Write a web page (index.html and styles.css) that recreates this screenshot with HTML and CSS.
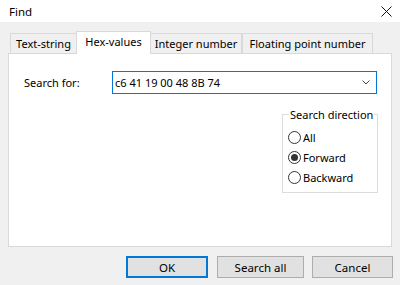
FILE: index.html
```html
<!DOCTYPE html>
<html lang="en">
<head>
  <meta charset="UTF-8">
  <title>Find</title>
  <link rel="stylesheet" href="styles.css">
</head>
<body>
  <div class="window">
    <div class="titlebar">
      <span class="title">Find</span>
      <svg class="close" width="11" height="11" viewBox="0 0 11 11">
        <path d="M0.5 0.5 L10.5 10.5 M10.5 0.5 L0.5 10.5" stroke="#111" stroke-width="1" fill="none"/>
      </svg>
    </div>

    <div class="content">
      <div class="tabs">
        <div class="tab tab-text">Text-string</div>
        <div class="tab tab-hex active">Hex-values</div>
        <div class="tab tab-int">Integer number</div>
        <div class="tab tab-float">Floating point number</div>
      </div>

      <div class="panel">
        <div class="search-row">
          <label class="search-label">Search for:</label>
          <div class="combo">
            <span class="combo-value">c6 41 19 00 48 8B 74</span>
            <svg class="chevron" width="8" height="5" viewBox="0 0 8 5">
              <path d="M0.5 0.5 L4 4 L7.5 0.5" stroke="#444" stroke-width="1" fill="none"/>
            </svg>
          </div>
        </div>

        <fieldset class="direction">
          <legend>Search direction</legend>
          <div class="radio"><span class="dot"></span>All</div>
          <div class="radio checked"><span class="dot"></span>Forward</div>
          <div class="radio"><span class="dot"></span>Backward</div>
        </fieldset>
      </div>

      <div class="buttons">
        <button class="btn btn-ok">OK</button>
        <button class="btn btn-all">Search all</button>
        <button class="btn btn-cancel">Cancel</button>
      </div>
    </div>
  </div>
</body>
</html>
```

FILE: styles.css
```css
body {
  margin: 0;
  font-family: "Noto Sans", "Liberation Sans", sans-serif;
  font-size: 11px;
  color: #000;
  background-color: #f0f0f0;
}

.window {
  width: 400px;
  height: 285px;
  background-color: #f0f0f0;
}

.titlebar {
  height: 22px;
  background-color: #fff;
  display: flex;
  justify-content: space-between;
  align-items: center;
  padding: 0 8px 0 9px;
}

.title {
  font-size: 11.5px;
}

.close {
  margin-top: 1px;
}

.content {
  padding: 9px 0 0 8px;
}

.tabs {
  display: flex;
  align-items: flex-end;
  height: 22px;
  padding-left: 2px;
  position: relative;
  z-index: 1;
}

.tab {
  height: 20px;
  box-sizing: border-box;
  border: 1px solid #d9d9d9;
  border-bottom: none;
  background-color: #f0f0f0;
  text-align: center;
  line-height: 20px;
  white-space: nowrap;
}

.tab-text { width: 67px; }
.tab-hex { width: 75px; }
.tab-int { width: 91px; border-left: none; }
.tab-float { width: 131px; }

.tab.active {
  height: 23px;
  background-color: #fff;
  line-height: 19px;
  margin-bottom: -1px;
  margin-left: -1px;
}

.panel {
  width: 384px;
  height: 194px;
  box-sizing: border-box;
  background-color: #fff;
  border: 1px solid #d9d9d9;
  padding: 17px 13px 0 15px;
}

.search-row {
  display: flex;
  align-items: center;
}

.search-label {
  width: 88px;
}

.combo {
  width: 265px;
  height: 23px;
  box-sizing: border-box;
  border: 1px solid #0078d7;
  display: flex;
  align-items: center;
  justify-content: space-between;
  padding: 0 6px 0 2px;
}

.direction {
  width: 96px;
  box-sizing: border-box;
  margin: 13px 0 0 auto;
  border: 1px solid #dcdcdc;
  padding: 5px 0 5px 5px;
}

.direction legend {
  padding: 0 1px;
  margin-left: 1px;
}

.radio {
  display: flex;
  align-items: center;
  height: 20px;
}

.dot {
  width: 13px;
  height: 13px;
  box-sizing: border-box;
  border: 1px solid #333;
  border-radius: 50%;
  margin-right: 2px;
  display: flex;
  align-items: center;
  justify-content: center;
}

.radio.checked .dot::after {
  content: "";
  width: 7px;
  height: 7px;
  border-radius: 50%;
  background-color: #333;
}

.buttons {
  display: flex;
  justify-content: flex-end;
  gap: 8px;
  padding: 9px 7px 0 0;
}

.btn {
  height: 22px;
  box-sizing: border-box;
  background-color: #e1e1e1;
  border: 1px solid #adadad;
  font-family: inherit;
  font-size: 11.5px;
  color: #000;
  padding: 0;
}

.btn-ok {
  width: 82px;
  border: 2px solid #0078d7;
  margin-right: 1px;
}

.btn-all { width: 87px; }
.btn-cancel { width: 81px; }
```
